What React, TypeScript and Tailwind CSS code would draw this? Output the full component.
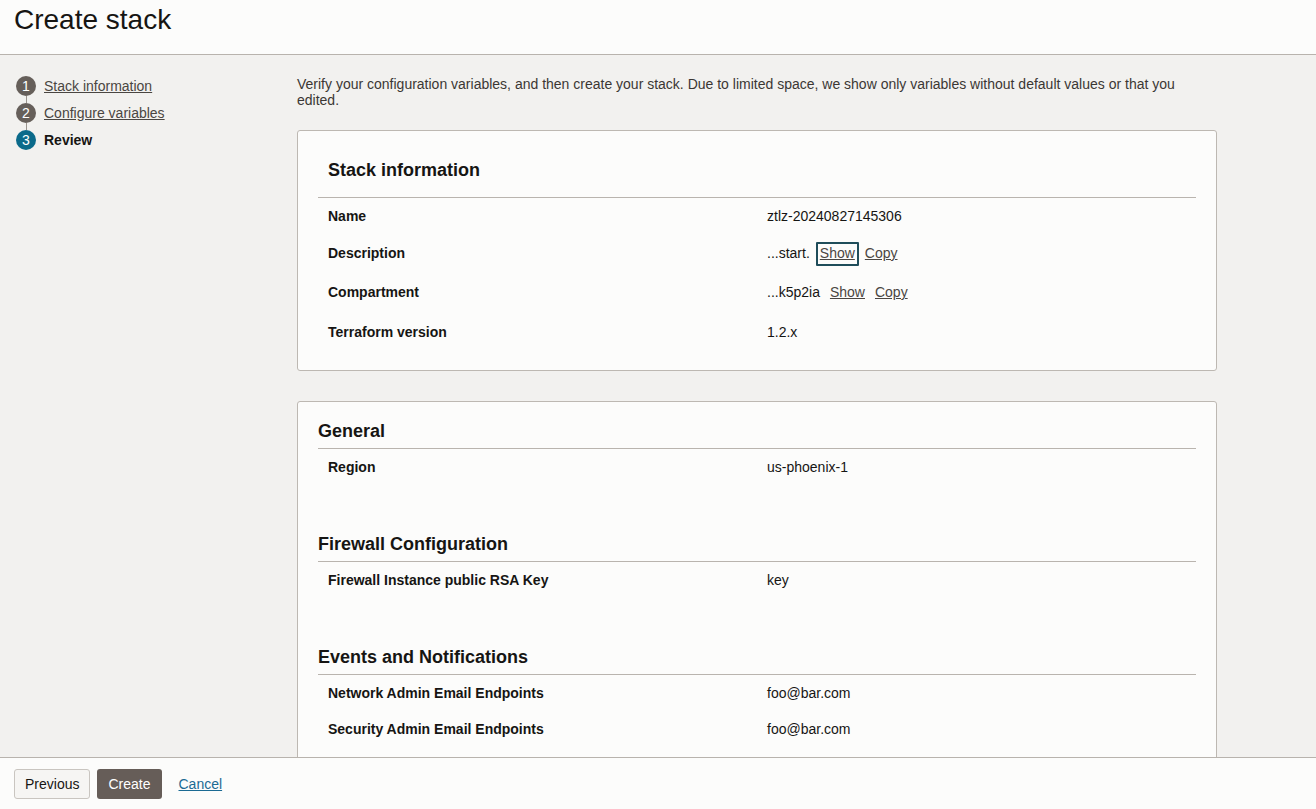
import React from "react";

const steps = [
  { n: 1, label: "Stack information", done: true },
  { n: 2, label: "Configure variables", done: true },
  { n: 3, label: "Review", done: false },
];

const LinkBtn = ({
  children,
  focused,
  gap = "ml-[6px]",
}: {
  children: React.ReactNode;
  focused?: boolean;
  gap?: string;
}) => (
  <span
    className={`${gap} inline-flex h-[24px] items-center px-[2px] underline text-[#4a4642] rounded-[1px] ${
      focused ? "border-2 border-[#1f4d5a]" : "border-2 border-transparent"
    }`}
  >
    {children}
  </span>
);

const Row = ({ label, value, h }: { label: string; value: React.ReactNode; h: string }) => (
  <div className={`grid grid-cols-2 items-center ${h}`}>
    <div className="px-[10px] font-bold text-[14px] text-[#161513]">{label}</div>
    <div className="px-[10px] text-[14px] text-[#161513] flex items-center">{value}</div>
  </div>
);

const Section = ({ title, rows }: { title: string; rows: { label: string; value: string }[] }) => (
  <div className="pb-[46px]">
    <h3 className="pt-[1px] text-[18px] leading-[24px] font-bold text-[#161513]">{title}</h3>
    <div className="mt-[5px] border-t border-[#b9b4ae]" />
    {rows.map((r) => (
      <Row key={r.label} label={r.label} value={r.value} h="h-[36px]" />
    ))}
  </div>
);

export default function App() {
  return (
    <div className="h-[809px] w-full flex flex-col overflow-hidden font-['Liberation_Sans',Arial,sans-serif] text-[#161513]">
      {/* header */}
      <div className="h-[55px] shrink-0 border-b border-[#b8b3ad] bg-[#fcfcfb] pl-[14px] pt-[4px]">
        <h1 className="text-[28px] leading-[32px] text-[#161513]">Create stack</h1>
      </div>

      {/* body */}
      <div className="flex-1 min-h-0 flex bg-[#f2f1ef] overflow-hidden">
        {/* steps */}
        <div className="w-[297px] shrink-0 pt-[21px] pl-[16px]">
          {steps.map((s, i) => (
            <div key={s.n} className="flex items-start">
              <div className="flex flex-col items-center w-[20px]">
                <div
                  className={`w-[20px] h-[20px] rounded-full flex items-center justify-center text-white text-[14px] leading-none ${
                    s.done ? "bg-[#665f5a]" : "bg-[#0b6a8a]"
                  }`}
                >
                  {s.n}
                </div>
                {i < steps.length - 1 && <div className="w-px h-[7px] bg-[#9a948e]" />}
              </div>
              <div
                className={`ml-[8px] h-[20px] flex items-center text-[14px] ${
                  s.done ? "underline text-[#4a4642]" : "font-bold text-[#161513]"
                }`}
              >
                {s.label}
              </div>
            </div>
          ))}
        </div>

        {/* content */}
        <div className="w-[920px] shrink-0 pt-[21px]">
          <p className="text-[14px] leading-[16px] text-[#3b3734] pr-[20px]">
            Verify your configuration variables, and then create your stack. Due to limited space, we show only variables
            without default values or that you edited.
          </p>

          <div className="mt-[22px] h-[241px] border border-[#bdb8b2] rounded-[3px] bg-[#fcfcfb] px-[20px] pt-[27px]">
            <h3 className="px-[10px] text-[18px] leading-[24px] font-bold">Stack information</h3>
            <div className="mt-[15px] border-t border-[#b9b4ae]" />
            <Row label="Name" value="ztlz-20240827145306" h="h-[36px]" />
            <Row
              label="Description"
              h="h-[39px]"
              value={
                <>
                  <span>...start.</span>
                  <LinkBtn focused>Show</LinkBtn>
                  <LinkBtn gap="ml-[2px]">Copy</LinkBtn>
                </>
              }
            />
            <Row
              label="Compartment"
              h="h-[39px]"
              value={
                <>
                  <span>...k5p2ia</span>
                  <LinkBtn>Show</LinkBtn>
                  <LinkBtn gap="ml-[2px]">Copy</LinkBtn>
                </>
              }
            />
            <Row label="Terraform version" value="1.2.x" h="h-[40px]" />
          </div>

          <div className="mt-[30px] border border-[#bdb8b2] rounded-[3px] bg-[#fcfcfb] px-[20px] pt-[16px]">
            <Section title="General" rows={[{ label: "Region", value: "us-phoenix-1" }]} />
            <Section
              title="Firewall Configuration"
              rows={[{ label: "Firewall Instance public RSA Key", value: "key" }]}
            />
            <Section
              title="Events and Notifications"
              rows={[
                { label: "Network Admin Email Endpoints", value: "foo@bar.com" },
                { label: "Security Admin Email Endpoints", value: "foo@bar.com" },
              ]}
            />
          </div>
        </div>
      </div>

      {/* footer */}
      <div className="h-[52px] shrink-0 border-t border-[#b8b3ad] bg-[#fcfcfb] pl-[14px] pt-[11px] flex items-start">
        <button className="h-[30px] px-[10px] border border-[#c9c5c0] rounded-[3px] bg-[#f6f5f3] text-[14px] text-[#161513]">
          Previous
        </button>
        <button className="ml-[7px] h-[30px] px-[11px] rounded-[3px] bg-[#665d58] text-[14px] text-white">
          Create
        </button>
        <a className="ml-[17px] h-[30px] flex items-center text-[14px] underline text-[#1b6a93]">Cancel</a>
      </div>
    </div>
  );
}
